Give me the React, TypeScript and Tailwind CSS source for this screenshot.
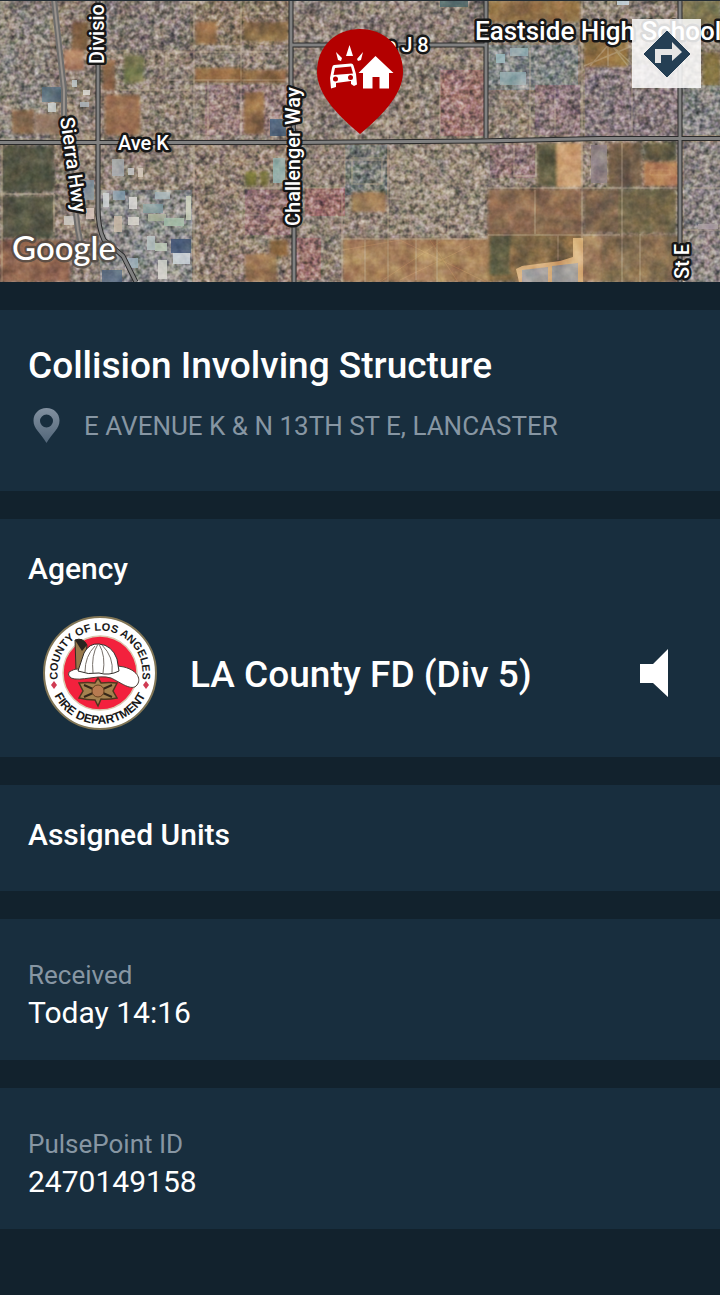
import type { ReactNode } from "react";

type Patch = [number, number, number, number, string];

// Ground cover under the neighbourhood texture: x, y, width, height, colour
const ground: Patch[] = [
  [0, 0, 720, 282, "#8b8074"],
  [0, 0, 50, 140, "#84807a"],
  [105, 0, 85, 50, "#807873"],
  [196, 0, 94, 45, "#897968"],
  [205, 85, 85, 50, "#917a78"],
  [290, 0, 195, 45, "#877c75"],
  [292, 50, 90, 85, "#887d75"],
  [440, 70, 46, 66, "#97716f"],
  [488, 45, 90, 45, "#7c8485"],
  [535, 85, 45, 50, "#89757a"],
  [585, 65, 95, 72, "#83777c"],
  [682, 85, 38, 50, "#808283"],
  [100, 190, 92, 92, "#878a8a"],
  [195, 145, 95, 137, "#8f8072"],
  [305, 188, 40, 28, "#996d6d"],
  [245, 190, 45, 45, "#907172"],
  [345, 145, 42, 50, "#757b77"],
  [390, 145, 95, 90, "#94897b"],
  [684, 142, 36, 140, "#858182"],
  [490, 145, 45, 33, "#8d7375"],
  [296, 238, 25, 42, "#98736f"],
];

// Open lots and fields
const fields: Patch[] = [
  [2, 146, 52, 46, "#454c38"],
  [2, 196, 52, 42, "#474d3b"],
  [0, 240, 70, 42, "#8d6049"],
  [72, 22, 16, 28, "#735936"],
  [64, 50, 20, 20, "#a8745a"],
  [195, 22, 22, 22, "#8d6842"],
  [124, 55, 20, 28, "#707447"],
  [105, 95, 35, 40, "#95694a"],
  [103, 60, 12, 30, "#7b5a3a"],
  [12, 110, 22, 24, "#806045"],
  [35, 114, 30, 20, "#947c60"],
  [195, 68, 48, 14, "#946b3c"],
  [244, 22, 44, 19, "#82683f"],
  [244, 70, 42, 13, "#8b653d"],
  [244, 92, 20, 42, "#8d6941"],
  [245, 171, 12, 15, "#62662b"],
  [260, 171, 8, 15, "#6c6a32"],
  [270, 240, 18, 16, "#876236"],
  [245, 254, 32, 28, "#9a7750"],
  [352, 192, 34, 20, "#9a7650"],
  [343, 239, 146, 43, "#a98157"],
  [488, 0, 92, 22, "#8a6b3c"],
  [584, 25, 44, 42, "#8b6c39"],
  [682, 0, 38, 24, "#77734a"],
  [703, 53, 17, 32, "#7d7138"],
  [537, 143, 20, 44, "#55563a"],
  [557, 143, 25, 44, "#d8a773"],
  [608, 143, 34, 44, "#68573f"],
  [644, 143, 32, 18, "#565238"],
  [644, 162, 34, 24, "#b2774e"],
  [488, 189, 94, 46, "#866649"],
  [584, 189, 34, 44, "#785f46"],
  [618, 189, 58, 44, "#696140"],
  [488, 235, 92, 47, "#7a643e"],
  [490, 235, 20, 40, "#55583a"],
  [580, 235, 100, 47, "#806b48"],
  [580, 235, 22, 47, "#9c7a57"],
];

const roofs: Patch[] = [
  [42, 87, 20, 15, "#5b7584"], [48, 103, 8, 9, "#c8d0cf"],
  [72, 80, 5, 7, "#c2ccd0"], [83, 90, 7, 5, "#dcdbd8"], [80, 102, 9, 5, "#b2bcc0"],
  [64, 216, 10, 9, "#c6c6c2"], [86, 208, 8, 11, "#e0cfc7"], [82, 180, 12, 20, "#8a9ba1"],
  [112, 159, 12, 17, "#a8b0b1"], [128, 168, 6, 7, "#ccc"], [138, 168, 5, 9, "#d3c9bd"],
  [103, 193, 6, 14, "#cdd4d5"], [113, 191, 12, 9, "#91a7b2"], [129, 197, 8, 12, "#e1e0dc"],
  [143, 204, 20, 9, "#7a9b9e"], [155, 192, 15, 7, "#9cb2b5"], [148, 214, 18, 7, "#adb69f"],
  [164, 218, 20, 8, "#afc6b4"], [114, 216, 8, 16, "#c7b9a9"], [128, 217, 11, 8, "#d8d8ce"],
  [147, 236, 8, 14, "#b7c5c5"], [155, 243, 12, 8, "#bfcfbd"], [171, 239, 20, 14, "#3f5675"],
  [173, 253, 17, 11, "#ccd7dd"], [158, 260, 9, 19, "#d4d7ce"], [102, 270, 20, 12, "#50657e"],
  [186, 196, 5, 24, "#cad0b8"], [125, 258, 13, 10, "#9eb3bd"],
  [270, 119, 16, 17, "#405c76"], [273, 158, 12, 25, "#91b1ad"],
  [496, 54, 9, 9, "#9fbec0"], [510, 48, 18, 8, "#98b1b4"], [500, 72, 26, 13, "#91abad"],
  [617, 0, 12, 5, "#ccdce4"], [440, 0, 28, 7, "#49666b"],
  [591, 145, 16, 38, "#877f83"], [698, 224, 20, 5, "#b0a8a7"],
];

const minorStreets =
  "M0 139H50M0 194H54M2 142V282M54 194V232M194 0V282M172 52H285M120 90H190M166 52V80H290M208 80V135M241 0V135M388 45V282M342 192V282M342 239H486M305 188H342M440 70V136M365 240V282M416 238V280M437 236V282M488 188H678M582 0V240M622 143V282M632 20V135M536 145V176H514V145M488 235H620M535 190V234M558 235V260M608 0V66M632 46L584 66M584 20L634 66M610 43L590 66M610 43L628 66M530 48V136M555 90V135M245 188H290M244 215H288M300 160H388M345 150V186M352 158H382V184H352ZM690 188H720M684 230H720M448 188V235M640 234V282";

const majorRoads =
  "M0 142.500H290L480 141L600 138.500H720M98 0V208Q98 228 104 240L123 256L136 282M291 0V98Q294 125 294 150V282M291 45H486M486 0V138M680 0V139M680 139V282";

function Areas({ items }: { items: Patch[] }) {
  return (
    <>
      {items.map(([x, y, w, h, fill]) => (
        <rect key={`${x}-${y}-${w}`} x={x} y={y} width={w} height={h} fill={fill} />
      ))}
    </>
  );
}

function MapLabel({ x, y, size = 20, angle = 0, children }: { x: number; y: number; size?: number; angle?: number; children: ReactNode }) {
  return (
    <text
      x={x}
      y={y}
      fontSize={size}
      transform={`rotate(${angle} ${x} ${y})`}
      fill="#fff"
      stroke="#161616"
      strokeWidth="5"
      strokeLinejoin="round"
      paintOrder="stroke"
      className="font-medium"
    >
      {children}
    </text>
  );
}

function SatelliteMap() {
  return (
    <svg viewBox="0 0 720 282" className="block h-auto w-full" role="img" aria-label="Map of the incident location">
      <defs>
        <filter id="houses" x="0" y="0" width="100%" height="100%" colorInterpolationFilters="sRGB">
          <feTurbulence type="fractalNoise" baseFrequency="0.2" numOctaves="2" seed="8" />
          <feColorMatrix values=".95 .15 .05 0 -.07  .85 .25 .05 0 -.07  .85 .12 .18 0 -.08  0 0 0 0 1" />
        </filter>
        <filter id="soil" x="0" y="0" width="100%" height="100%" colorInterpolationFilters="sRGB">
          <feTurbulence type="fractalNoise" baseFrequency="0.06" numOctaves="4" seed="3" />
          <feColorMatrix values=".35 .15 0 0 .27  .25 .2 0 0 .28  .2 .15 .1 0 .28  0 0 0 0 1" />
        </filter>
        <filter id="soften"><feGaussianBlur stdDeviation="1.500" /></filter>
        <filter id="soften-roofs"><feGaussianBlur stdDeviation="0.700" /></filter>
      </defs>
      <g className="isolate">
        <Areas items={ground} />
        <rect width="720" height="282" filter="url(#houses)" className="mix-blend-hard-light" opacity="0.75" />
        <g filter="url(#soften)" opacity="0.82"><Areas items={fields} /></g>
        <path d="M516 269L522 266L560 261L573 257V238H583V282H519Z" fill="#d3aa77" />
        <path d="M522 270L548 267V282H522ZM552 266L578 263V282H552Z" fill="#9c9b99" />
        <path d="M343 250L400 240L486 282M380 282L440 242M400 280L470 246M430 240L458 282M650 170H670V175H650Z" fill="none" stroke="#ca9e6d" strokeOpacity="0.4" />
        <g filter="url(#soften-roofs)" opacity="0.85"><Areas items={roofs} /></g>
        <path d={minorStreets} fill="none" stroke="#c4b49b" strokeOpacity="0.4" strokeWidth="1.500" />
        <rect width="720" height="282" filter="url(#soil)" className="mix-blend-overlay" />
      </g>
      <path d="M54 0L64 90V120L78 230L82 250" fill="none" stroke="#6e6d6c" strokeWidth="6" />
      <path d="M54 0L64 90V120L78 230L82 250" fill="none" stroke="#99928c" strokeWidth="2" />
      <path d={majorRoads} fill="none" stroke="#2b2b2b" strokeWidth="5" />
      <path d={majorRoads} fill="none" stroke="#808080" strokeWidth="3" />
      <path d="M0 0.500H720" stroke="#232c33" />
      <MapLabel x={104} y={64} angle={-90}>Divisio</MapLabel>
      <MapLabel x={60} y={118} angle={82}>Sierra Hwy</MapLabel>
      <MapLabel x={118} y={150}>Ave K</MapLabel>
      <MapLabel x={300} y={226} angle={-90}>Challenger Way</MapLabel>
      <MapLabel x={363} y={52}>Ave J 8</MapLabel>
      <MapLabel x={475} y={40} size={26}>Eastside High School</MapLabel>
      <MapLabel x={689} y={279} angle={-90}>St E</MapLabel>
      <text x="12" y="260" fontSize="33" fill="#fff" stroke="#4d4640" strokeOpacity="0.8" strokeWidth="5" paintOrder="stroke" strokeLinejoin="round" className="font-['Lato'] font-medium">Google</text>
      <g>
        <path d="M360 134C342 119 317 96 317 72C317 46 336 29 360 29S403 46 403 72C403 96 378 119 360 134Z" fill="#b30000" />
        <g fill="#fff">
          <path d="M336 52L342 58L341 61L338 60ZM349.500 45L353 56H346ZM363 52L361 60L358 61L357 59Z" />
          <path fillRule="evenodd" d="M334 65L351 63.500Q353 63.500 353.500 65.500L356 74L357 84.500L354 86L351 84V81L336 83V87L331 88.500L330 78L332 68Q332.500 65 334 65ZM335 68L333.500 75L353 73.500L351 66.500ZM335.500 76.500A2.500 2.500 0 1 0 335.500 81.500A2.500 2.500 0 1 0 335.500 76.500ZM350.500 75A2.500 2.500 0 1 0 350.500 80A2.500 2.500 0 1 0 350.500 75Z" />
          <path d="M375.500 56L393.500 73H389V88.500H379.500V77H372.500V88.500H363V73H358.500Z" />
        </g>
      </g>
    </svg>
  );
}

function FireDepartmentSeal() {
  return (
    <svg viewBox="0 0 116 116" className="size-29 shrink-0" role="img" aria-label="County of Los Angeles Fire Department">
      <defs>
        <path id="seal-top" d="M21.200 79.250A42.500 42.500 0 1 1 94.800 79.250" />
        <path id="seal-bottom" d="M7 58A51 51 0 0 0 109 58" />
      </defs>
      <circle cx="58" cy="58" r="56" fill="#fff" stroke="#827656" strokeWidth="2" />
      <circle cx="58" cy="58" r="37" fill="#f3213d" stroke="#d9c9b0" strokeWidth="1.500" />
      <g fill="#191919" className="font-['Liberation_Sans'] font-bold" textAnchor="middle">
        <text fontSize="11"><textPath href="#seal-top" startOffset="50%">COUNTY OF LOS ANGELES</textPath></text>
        <text fontSize="12"><textPath href="#seal-bottom" startOffset="50%">FIRE DEPARTMENT</textPath></text>
      </g>
      <path d="M12 66L15 70L12 74L9 70ZM104 66L107 70L104 74L101 70Z" fill="#cf3a52" />
      <path d="M33 25Q41 22 45 30L42 57L34 55Z" fill="#98794b" stroke="#352b20" />
      <path d="M33 25Q41 22 45 30L40 36Z" fill="#29241f" />
      <path d="M27 57C31 55 32 54 37 54C50 52 69 49 82 52C97 56 99 65 95 70C90 77 78 67 69 63C57 59 38 67 29 63Q25 60 27 57Z" fill="#fff" stroke="#4c3e35" />
      <path d="M36 56L42 38Q47 28 57 29Q70 30 75 44L77 56Q67 61 57 58Q46 60 36 56Z" fill="#fff" stroke="#302b28" />
      <path d="M43 57Q43 41 53 31M51 58Q49 40 56 29M61 58Q64 41 57 29M70 58Q72 42 60 30" fill="none" stroke="#77706a" />
      <path d="M37 68Q46 67 53 68L56 63L59 68Q67 67 75 68L71 76L75 83Q65 85 59 84L56 91L53 85Q45 85 37 83L41 76Z" fill="#a5824f" stroke="#50371e" strokeWidth="1.500" />
      <path d="M42 70L51 74M70 70L61 74M42 82L51 78M70 82L61 78" stroke="#352719" strokeWidth="2" />
      <circle cx="56" cy="76" r="6" fill="#b77a50" stroke="#664020" />
    </svg>
  );
}

function Field({ label, value }: { label: string; value: string }) {
  return (
    <dl className="bg-[#182e3e] px-7 pt-10 pb-[29px]">
      <dt className="text-[26px] leading-8 text-[#8796a3]">{label}</dt>
      <dd className="pt-1 text-[30px] leading-9 text-white">{value}</dd>
    </dl>
  );
}

export default function App() {
  return (
    <main className="flex min-h-screen flex-col gap-7 bg-[#12222d] font-['Roboto',sans-serif] text-white">
      <section className="relative overflow-hidden">
        <SatelliteMap />
        <button type="button" aria-label="Directions" className="absolute top-[19px] right-[19px] flex size-[69px] items-center justify-center bg-white/85">
          <svg viewBox="0 0 48 48" className="size-12">
            <path d="M24 1L47 24L24 47L1 24Z" fill="#253f54" stroke="#253f54" strokeLinejoin="round" />
            <path d="M12 33V19H29V12L39 22L29 31V25H18V33Z" fill="#e5e5e5" />
          </svg>
        </button>
      </section>

      <section className="bg-[#182e3e] px-7 pt-8 pb-[47px]">
        <h1 className="text-[37px] leading-12 font-medium">Collision Involving Structure</h1>
        <div className="flex items-center gap-5 pt-[18px]">
          <svg viewBox="0 0 36 36" className="size-9" aria-hidden="true">
            <defs>
              <linearGradient id="location" x1="0" y1="0" x2="0" y2="1">
                <stop stopColor="#8291a0" />
                <stop offset="1" stopColor="#526679" />
              </linearGradient>
            </defs>
            <path fill="url(#location)" fillRule="evenodd" d="M18.500 0C11 0 5.500 5.500 5.500 12.500C5.500 21 12 24 18.500 35C25 24 31.500 21 31.500 12.500C31.500 5.500 26 0 18.500 0ZM18.500 6.500A6.500 6.500 0 1 1 18.500 19.500A6.500 6.500 0 1 1 18.500 6.500Z" />
          </svg>
          <p className="text-[26px] leading-9 text-[#8796a3]">E AVENUE K &amp; N 13TH ST E, LANCASTER</p>
        </div>
      </section>

      <section className="bg-[#182e3e] px-7 pt-8 pb-[26px]">
        <h2 className="text-[30px] leading-9 font-medium">Agency</h2>
        <div className="flex items-center pt-7 pl-3.5">
          <FireDepartmentSeal />
          <p className="grow pt-1 pl-8 text-[37px] leading-12 font-medium">LA County FD (Div 5)</p>
          <button type="button" aria-label="Listen to radio" className="mr-6">
            <svg viewBox="0 0 28 48" className="h-12 w-7">
              <path d="M0 15H13L28 0V48L13 34H0Z" fill="#fff" />
            </svg>
          </button>
        </div>
      </section>

      <section className="bg-[#182e3e] px-7 pt-8 pb-[38px]">
        <h2 className="text-[30px] leading-9 font-medium">Assigned Units</h2>
      </section>

      <Field label="Received" value="Today 14:16" />
      <Field label="PulsePoint ID" value="2470149158" />
    </main>
  );
}
